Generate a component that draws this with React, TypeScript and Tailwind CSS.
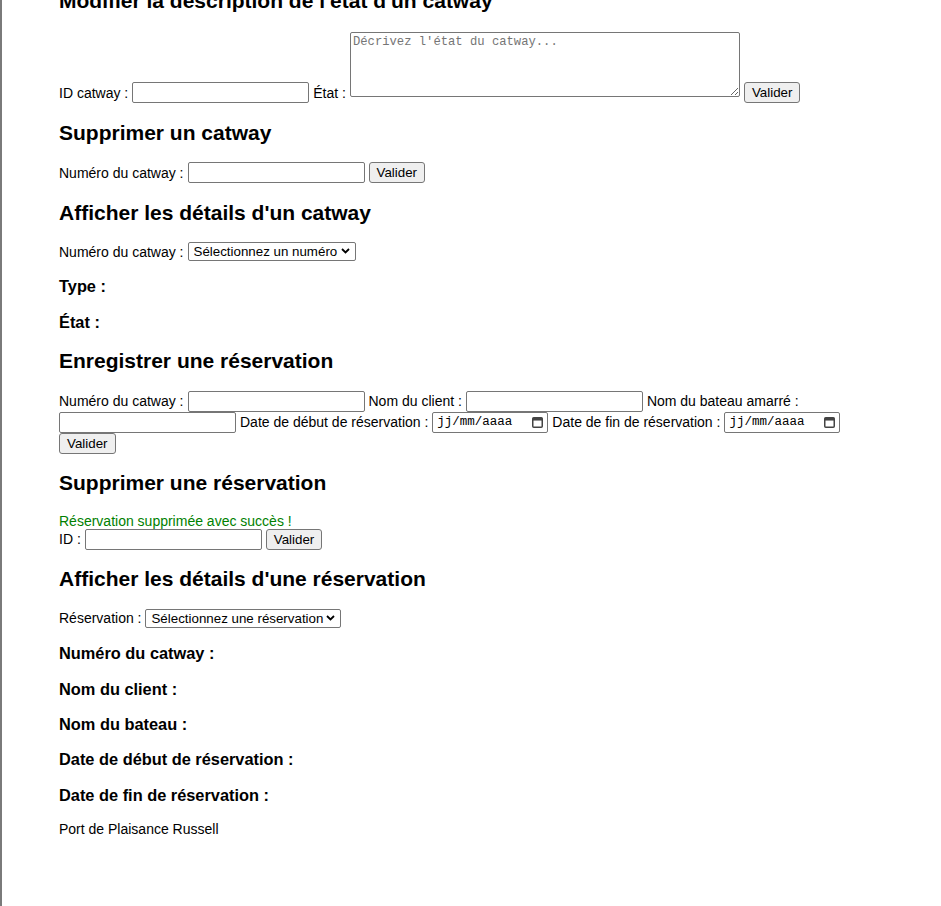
import React from 'react';

const h2Cls = 'my-[17.5px] text-[21px] font-bold leading-[24px]';
const h3Cls = 'my-[16.38px] text-[16.38px] font-bold leading-[19px]';
const rowCls = 'flex flex-wrap items-center gap-x-1';
const labelCls = 'whitespace-nowrap';
const inputCls =
  'h-[21px] w-[177px] rounded-[2px] border border-[#767676] px-[2px] text-[13.333px] leading-[15px] outline-none';
const btnCls =
  'h-[21px] rounded-[3px] border border-[#767676] bg-[#efefef] px-[7px] text-[13.333px] leading-[15px] text-black';

function Select({ width, placeholder }: { width: string; placeholder: string }) {
  return (
    <span className="relative inline-flex">
      <select
        className={`h-[19px] ${width} appearance-none rounded-[2px] border border-[#767676] pl-[5px] text-[13.333px] leading-[15px] text-black`}
      >
        <option>{placeholder}</option>
      </select>
      <svg
        className="pointer-events-none absolute right-[6px] top-[6px]"
        width="9"
        height="6"
        viewBox="0 0 9 6"
      >
        <path d="M1 1l3.5 3.5L8 1" fill="none" stroke="#000" strokeWidth="1.8" />
      </svg>
    </span>
  );
}

function DateField() {
  return (
    <span className="inline-flex h-[21px] w-[116px] items-center justify-between rounded-[2px] border border-[#767676] pl-[4px] pr-[4px]">
      <span className="font-['Liberation_Mono',monospace] text-[12.5px] leading-[15px]">jj/mm/aaaa</span>
      <svg width="11" height="11" viewBox="0 0 11 11">
        <rect x="0.75" y="0.75" width="9.5" height="9.5" rx="1" fill="none" stroke="#444" strokeWidth="1.5" />
        <rect x="0.75" y="0.75" width="9.5" height="2.8" fill="#444" />
      </svg>
    </span>
  );
}

export default function App() {
  return (
    <div className="min-h-[906px] border-l-2 border-[#7a7a7a] font-['Liberation_Sans',Arial,sans-serif] text-[14px] leading-[16px] text-black">
      <div className="ml-[57px] flow-root w-[820px]">
        <h2 className="-mt-[11.5px] mb-[17.5px] text-[21px] font-bold leading-[24px]">
          Modifier la description de l'état d'un catway
        </h2>
        <form className="mt-[19.5px] flex items-end gap-x-1">
          <label className={`${labelCls} mb-[2.5px]`}>ID catway :</label>
          <input type="text" className={inputCls} />
          <label className={`${labelCls} mb-[2.5px]`}>État :</label>
          <textarea
            placeholder="Décrivez l'état du catway..."
            className="mb-[6px] h-[65px] w-[390px] rounded-[2px] border border-[#767676] p-[2px] font-['Liberation_Mono',monospace] text-[12.2px] leading-[15px] outline-none placeholder:text-[#757575]"
          />
          <button type="button" className={btnCls}>
            Valider
          </button>
        </form>

        <h2 className={h2Cls}>Supprimer un catway</h2>
        <form className={rowCls}>
          <label className={labelCls}>Numéro du catway :</label>
          <input type="text" className={inputCls} />
          <button type="button" className={btnCls}>
            Valider
          </button>
        </form>

        <h2 className={h2Cls}>Afficher les détails d'un catway</h2>
        <div className={rowCls}>
          <label className={labelCls}>Numéro du catway :</label>
          <Select width="w-[168px]" placeholder="Sélectionnez un numéro" />
        </div>
        <h3 className={h3Cls}>Type :</h3>
        <h3 className={h3Cls}>État :</h3>

        <h2 className={h2Cls}>Enregistrer une réservation</h2>
        <form className={rowCls}>
          <label className={labelCls}>Numéro du catway :</label>
          <input type="text" className={inputCls} />
          <label className={labelCls}>Nom du client :</label>
          <input type="text" className={inputCls} />
          <label className={labelCls}>Nom du bateau amarré :</label>
          <input type="text" className={inputCls} />
          <label className={labelCls}>Date de début de réservation :</label>
          <DateField />
          <label className={labelCls}>Date de fin de réservation :</label>
          <DateField />
          <button type="button" className={btnCls}>
            Valider
          </button>
        </form>

        <h2 className={h2Cls}>Supprimer une réservation</h2>
        <p className="text-[#008000]">Réservation supprimée avec succès !</p>
        <form className={rowCls}>
          <label className={labelCls}>ID :</label>
          <input type="text" className={inputCls} />
          <button type="button" className={btnCls}>
            Valider
          </button>
        </form>

        <h2 className={h2Cls}>Afficher les détails d'une réservation</h2>
        <div className={rowCls}>
          <label className={labelCls}>Réservation :</label>
          <Select width="w-[196px]" placeholder="Sélectionnez une réservation" />
        </div>
        <h3 className={h3Cls}>Numéro du catway :</h3>
        <h3 className={h3Cls}>Nom du client :</h3>
        <h3 className={h3Cls}>Nom du bateau :</h3>
        <h3 className={h3Cls}>Date de début de réservation :</h3>
        <h3 className={h3Cls}>Date de fin de réservation :</h3>

        <footer>
          <p>Port de Plaisance Russell</p>
        </footer>
      </div>
    </div>
  );
}
